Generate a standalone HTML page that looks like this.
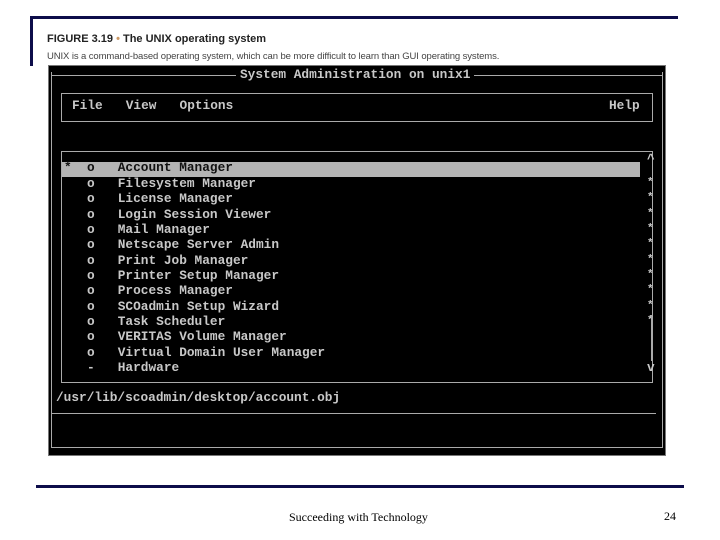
<!DOCTYPE html>
<html><head><style>
body{margin:0;width:720px;height:540px;background:#fff;position:relative;overflow:hidden;font-family:"Liberation Sans",sans-serif}
.a{position:absolute}
.t{position:absolute;font-family:"Liberation Mono",monospace;font-weight:bold;font-size:12.8px;color:#c8c8c8;white-space:pre;line-height:14px}
</style></head><body>
<div class="a" style="left:30px;top:16px;width:648px;height:3px;background:#0d0d4a"></div>
<div class="a" style="left:30px;top:16px;width:3px;height:50px;background:#0d0d4a"></div>
<div class="a" style="left:47px;top:33px;font-size:11px;font-weight:bold;color:#222;font-family:'Liberation Sans Narrow','Liberation Sans',sans-serif">FIGURE 3.19 <span style="color:#c96">•</span> The UNIX operating system</div>
<div class="a" style="left:47px;top:51px;font-size:9.5px;color:#444;letter-spacing:-0.1px">UNIX is a command-based operating system, which can be more difficult to learn than GUI operating systems.</div>
<div class="a" style="left:48px;top:65px;width:618px;height:391px;background:#000;border:1px solid #777;box-sizing:border-box"></div>
<div class="a" style="left:51px;top:72px;width:612px;height:376px;border:1px solid #aaa;border-top:none;box-sizing:border-box"></div>
<div class="a" style="left:51px;top:75px;width:612px;height:1px;background:#aaa"></div>
<div class="t" style="left:236px;top:68px;background:#000;padding:0 4px">System Administration on unix1</div>
<div class="a" style="left:61px;top:93px;width:592px;height:29px;border:1px solid #aaa;box-sizing:border-box"></div>
<div class="t" style="left:72px;top:99px">File   View   Options</div>
<div class="t" style="left:609px;top:99px">Help</div>
<div class="a" style="left:61px;top:151px;width:592px;height:232px;border:1px solid #aaa;border-top:1px solid #aaa;box-sizing:border-box"></div>
<div class="a" style="left:62px;top:162px;width:578px;height:15px;background:#b4b4b4"></div>
<div class="t" style="left:64px;top:161px;color:#111">*  o   Account Manager</div>
<div class="t" style="left:64px;top:176px;line-height:15.35px">   o   Filesystem Manager
   o   License Manager
   o   Login Session Viewer
   o   Mail Manager
   o   Netscape Server Admin
   o   Print Job Manager
   o   Printer Setup Manager
   o   Process Manager
   o   SCOadmin Setup Wizard
   o   Task Scheduler
   o   VERITAS Volume Manager
   o   Virtual Domain User Manager
   -   Hardware</div>
<div class="t" style="left:647px;top:176px;line-height:15.35px;font-size:11px">*
*
*
*
*
*
*
*
*
*</div>
<div class="t" style="left:647px;top:153px">^</div>
<div class="t" style="left:647px;top:361px">v</div>
<div class="a" style="left:651px;top:315px;width:1px;height:46px;background:#aaa"></div>
<div class="t" style="left:56px;top:391px">/usr/lib/scoadmin/desktop/account.obj</div>
<div class="a" style="left:52px;top:413px;width:604px;height:1px;background:#aaa"></div>
<div class="a" style="left:36px;top:485px;width:648px;height:3px;background:#0d0d4a"></div>
<div class="a" style="left:289px;top:510px;font-family:'Liberation Serif',serif;font-size:12px;color:#000">Succeeding with Technology</div>
<div class="a" style="left:664px;top:509px;font-family:'Liberation Serif',serif;font-size:12px;color:#000">24</div>
</body></html>
